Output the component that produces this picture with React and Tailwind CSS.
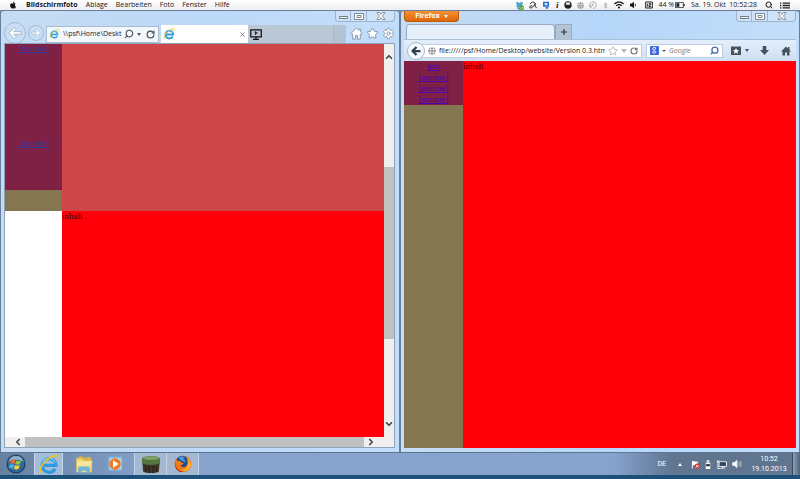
import { FaApple, FaWifi, FaVolumeDown, FaGlobe, FaBluetoothB } from 'react-icons/fa';
import { Star, Settings, Search, RotateCw, ChevronUp, ChevronDown, ChevronLeft, ChevronRight, X } from 'lucide-react';

const menuItems = ['Ablage', 'Bearbeiten', 'Foto', 'Fenster', 'Hilfe'];

function IeLogo({ className }) {
  return (
    <svg viewBox="0 0 24 24" className={className} fill="none">
      <path d="M19.500 17a7.800 7.800 0 1 1 1-4H6" stroke="#2c9bdf" strokeWidth="3.600" />
      <path d="M5 11c1-4 4-6 7.500-6s6 2 7 5" stroke="#7fd0f7" strokeWidth="1.200" />
      <path d="M4 22c-4-3 1-11 7-16S22 1 22.500 3c.3 1.500-.2 2.500-.8 3.500" stroke="#f2c21c" strokeWidth="1.800" />
    </svg>
  );
}

function NavArrow({ className }) {
  return (
    <svg viewBox="0 0 16 16" className={className}>
      <path d="M7.500 1.500L1 8l6.500 6.500 2-2L6.500 9.500H15v-3H6.500l3-3z" fill="#fff" stroke="#9fb3c9" />
    </svg>
  );
}

function FirefoxLogo() {
  return (
    <svg viewBox="0 0 24 24" className="size-[18px]">
      <circle cx="12" cy="12" r="11" fill="#e66912" />
      <circle cx="11" cy="9" r="8" fill="#234b93" />
      <path d="M6 3c4-2 7-1 9 1l-3 1c2 1 4 3 3 5L8 6z" fill="#4b9bdc" />
      <path d="M2 6c1 0 2 1 3 2 2-1 4 0 5 2l3 1c-1 2-4 2-4 3 1 3 6 3 8 0 2-4 1-8-1-11 6 3 8 9 6 13-3 7-12 9-17 4C0 16 0 10 2 6z" fill="#ef7d17" />
      <path d="M18 4c5 5 5 11 2 14-3 4-8 4-11 3 6 0 13-6 9-17z" fill="#f9bd2d" />
      <path d="M2 8c-1 8 4 14 11 14C7 25-1 18 2 8z" fill="#bd3510" />
    </svg>
  );
}

function StartOrb() {
  return (
    <svg viewBox="0 0 24 24" className="size-5">
      <circle cx="12" cy="12" r="11.500" fill="#1c4168" />
      <circle cx="12" cy="12" r="10" fill="#326a9c" />
      <path d="M3 9a9.500 9.500 0 0 1 18 0c-6-3-12-3-18 0z" fill="#8faec9" />
      <path d="M6 7.500c2-1.300 3.700-1 5.300-.2l-1.200 4.400c-1.600-.8-3.300-.9-5.300.3z" fill="#ef6733" />
      <path d="M12.300 7.700c2 1 3.700 1 5.700-.2l-1.200 4.600c-2 1-3.700 1-5.700 0z" fill="#8fc73e" />
      <path d="M4.500 13c2-1.200 3.700-1 5.300-.2l-1.200 4.500c-1.600-.8-3.400-.9-5.300.2z" fill="#3fb2ea" />
      <path d="M10.800 13.200c2 1 3.700 1 5.600 0l-1.200 4.500c-2 1.100-3.700 1-5.600 0z" fill="#fbd235" />
    </svg>
  );
}

function FolderIcon() {
  return (
    <svg viewBox="0 0 24 24" className="size-5">
      <path d="M3 4h3l1-2 4 2h6l1-1 3 2v16H3z" fill="#d9b550" />
      <path d="M3 6h7l2 2h10l-1 14H3z" fill="#f2d878" />
      <path d="M4 9h16v5H4z" fill="#f9e6a0" />
      <path d="M5 23v-5c0-2 1-3 3-3h8c2 0 3 1 3 3v5h-4v-3H9v3z" fill="#6cb6dc" />
    </svg>
  );
}

function MediaPlayerIcon() {
  return (
    <svg viewBox="0 0 24 24" className="size-4">
      <path d="M2 1h21v21H2z" fill="#86b9e2" />
      <path d="M4 3h17v17H4z" fill="#b4d4ee" />
      <circle cx="12" cy="12" r="8.500" fill="#f07a22" />
      <path d="M9 6.500v11l8.500-5.500z" fill="#fff" />
    </svg>
  );
}

function GrassBlockIcon() {
  return (
    <svg viewBox="0 0 24 24" className="size-5">
      <path d="M1.500 8h21l-1 13c-4 2.500-15 2.500-19 0z" fill="#41362b" />
      <path d="M1 5c5-3.500 17-3.500 22 0l-.5 6c-6 2.500-15 2.500-21 0z" fill="#56783f" />
      <path d="M2 5c5-2.800 15-2.800 20 0-5 2.500-15 2.500-20 0z" fill="#84a46a" />
      <path d="M6 14v8M10 14v9M14.500 14v9M18.500 14v8" stroke="#2a211a" strokeWidth="1.500" />
    </svg>
  );
}

function DropboxIcon() {
  return (
    <svg viewBox="0 0 24 24" className="size-[9px]">
      <path d="M2 5l5-3 5 4 5-4 5 3-4 4 4 4-10 5-10-5 4-4z" fill="#4c9fc9" />
      <path d="M6 15l6 5 6-5v4l-6 4-6-4z" fill="#2f7397" />
      <circle cx="18" cy="18" r="6" fill="#46a52f" />
      <path d="M15 18l2 2 4-4" stroke="#fff" strokeWidth="2" fill="none" />
    </svg>
  );
}

function MacMenuBar() {
  return (
    <header className="flex h-[10px] shrink-0 items-center justify-between bg-linear-to-b from-white to-[#eeeef2] pr-[10px] pl-[9px] text-[7px] leading-[10px] text-[#161616]">
      <nav className="flex items-center gap-2">
        <FaApple className="mr-px size-2" />
        <a href="#app" className="font-bold">Bildschirmfoto</a>
        {menuItems.map((item) => (
          <a key={item} href={'#' + item}>{item}</a>
        ))}
      </nav>
      <div className="flex items-center">
        <div className="mr-2 flex items-center gap-[5px]">
          <DropboxIcon />
          <svg viewBox="0 0 24 24" className="size-2" fill="none" stroke="#222" strokeWidth="3">
            <path d="M4 9c2-7 13-8 14-1 0 5-4 8-7 9M18 7c0 8 0 12 5 13M11 17c-4 6-8 5-9 2 0-4 5-7 8-3" />
          </svg>
          <svg viewBox="0 0 24 24" className="size-2">
            <path d="M3 2h18v14l-4 7h-6V17H3z" fill="#2c6fc9" />
            <path d="M8 6h8v7H8zM14 16h4l-3 4z" fill="#dcecff" />
          </svg>
          <span className="w-1 text-center font-['Liberation_Serif',serif] text-[9px] font-bold italic">i</span>
          <svg viewBox="0 0 24 24" className="size-2">
            <circle cx="12" cy="12" r="11" fill="#222" />
            <ellipse cx="12" cy="8" rx="7" ry="4" fill="#ddd" />
          </svg>
          <FaGlobe className="size-[7px] text-[#999]" />
          <svg viewBox="0 0 24 24" className="size-2" fill="none" stroke="#888" strokeWidth="2">
            <path d="M5 19a10 10 0 1 1 7 3M1 16l4 4 2-5M12 6v7H7" />
          </svg>
          <FaBluetoothB className="size-[7px] text-[#aaa]" />
          <FaWifi className="size-[10px]" />
          <FaVolumeDown className="size-2" />
        </div>
        <div className="flex items-center gap-[5px]">
          <svg viewBox="0 0 24 24" className="size-2" fill="none" stroke="#222" strokeWidth="3">
            <path d="M2 3h20v18H2zM7 8v9M11 8h6v4h-5v5h6" />
          </svg>
          <span className="flex items-center gap-px">
            44 %
            <svg viewBox="0 0 30 18" className="h-[6px] w-[10px]">
              <path d="M1 1h24v16H1z" fill="none" stroke="#222" strokeWidth="2.500" />
              <path d="M4 4h9v10H4zM26 6h3v6h-3z" fill="#222" />
            </svg>
          </span>
          <time className="ml-px whitespace-pre">Sa. 19. Okt  10:52:28</time>
          <Search className="ml-[3px] size-2" strokeWidth={3} />
          <svg viewBox="0 0 30 20" className="ml-[2px] h-[7px] w-[10px]" stroke="#222" strokeWidth="4">
            <path d="M0 3h4M8 3h22M0 10h4M8 10h22M0 17h4M8 17h22" />
          </svg>
        </div>
      </div>
    </header>
  );
}

function WindowButtons() {
  return (
    <div className="flex h-[11px] divide-x divide-[#9db4cc] rounded-b-sm border border-t-0 border-[#9db4cc] bg-[#cfe2f7]">
      <button aria-label="Minimieren" className="flex w-[15px] items-end justify-center pb-[2px]">
        <svg viewBox="0 0 9 3" className="h-[3px] w-[9px]" fill="#fff" stroke="#6e7b89"><path d="M.5.500h8v2h-8z" /></svg>
      </button>
      <button aria-label="Maximieren" className="flex w-[16px] items-center justify-center">
        <svg viewBox="0 0 10 7" className="h-[7px] w-[10px]" fill="#fff" stroke="#7b8997"><path d="M.5.500h9v6h-9zM3 2.500h4v2H3z" /></svg>
      </button>
      <button aria-label="Schließen" className="flex w-[27px] items-center justify-center">
        <svg viewBox="0 0 10 8" className="h-2 w-[10px]" fill="#fff" stroke="#6e7b89" strokeWidth=".8">
          <path d="M1 .5h2.500L5 2.500 6.500.5H9L6.500 4 9 7.500H6.500L5 5.500 3.500 7.500H1L3.500 4z" />
        </svg>
      </button>
    </div>
  );
}

function ExplorerWindow() {
  return (
    <section className="flex min-w-0 flex-col rounded-t-sm border-x border-t border-[#66809c] bg-linear-to-r from-[#c6dcf2] via-[#bcd9f8] to-[#c3defa] pr-1 pb-1 pl-[3px]">
      <div className="flex justify-end">
        <WindowButtons />
      </div>
      <div className="flex h-[21px] items-center">
        <button aria-label="Zurück" className="flex size-[22px] shrink-0 items-center justify-center rounded-full border border-[#a3bad3] bg-[#c8def5]">
          <NavArrow className="size-[14px]" />
        </button>
        <button aria-label="Vorwärts" className="ml-[2px] flex size-4 shrink-0 items-center justify-center rounded-full border border-[#a3bad3] bg-[#c8def5]">
          <NavArrow className="size-[10px] rotate-180" />
        </button>
        <div className="mt-[3px] ml-[2px] flex h-[17px] w-[113px] items-center border border-[#a9bccf] bg-[#f2f7fc] px-[2px] text-[#454c54]">
          <IeLogo className="size-[10px] shrink-0" />
          <input aria-label="Adresse" readOnly value="\\psf\Home\Deskt" className="ml-1 w-[61px] min-w-0 bg-transparent text-[7px] leading-3 text-[#1d2228] outline-none" />
          <Search className="size-[10px] shrink-0 -scale-x-100" strokeWidth={2.5} />
          <span className="mx-[3px] border-x-2 border-t-[3px] border-x-transparent border-t-[#555]" />
          <RotateCw className="ml-[2px] size-[9px] shrink-0" strokeWidth={3} />
        </div>
        <div className="mt-[3px] ml-[2px] flex h-[18px] w-[87px] items-center justify-between bg-white px-[2px]">
          <IeLogo className="size-3" />
          <button aria-label="Tab schließen"><X className="size-[7px] text-[#555]" strokeWidth={2.5} /></button>
        </div>
        <div className="mt-[3px] flex h-[18px] flex-1 items-center border-r border-[#a6b8ca] bg-[#bac7d4] pl-[2px]">
          <svg viewBox="0 0 24 22" className="h-[11px] w-3" fill="none" stroke="#111" strokeWidth="2.500">
            <path d="M1.500 1.500h21v14h-21zM12 16v4M6 20.500h12" />
            <path d="M10 5l5 3-3 1-1 3z" fill="#111" strokeWidth="1" />
          </svg>
        </div>
        <div className="mt-[3px] h-[18px] w-3 bg-[#b3c3d3]" />
        <div className="mt-[2px] ml-1 flex gap-[3px] text-[#8497ac]">
          <svg viewBox="0 0 24 24" className="size-[13px]" fill="#fff" stroke="currentColor" strokeWidth="1.800">
            <path d="M12 2L1.500 12l1.500 2 2-1v9.500h5V16h4v6.500h5V13l2 1 1.500-2-3-3V4h-3v2z" />
          </svg>
          <Star className="size-[13px]" fill="#fff" strokeWidth={1.8} />
          <Settings className="size-[13px]" fill="#fff" strokeWidth={1.8} />
        </div>
      </div>
      <div className="flex min-h-0 flex-1 flex-col border border-[#8da3b9] bg-[#f0efee]">
        <div className="flex min-h-0 flex-1">
          <div className="w-[57px] shrink-0 bg-white text-center font-['Liberation_Serif',serif] text-[9px] leading-[9px]">
            <div className="flex h-[146px] flex-col items-center gap-[86px] bg-[#7f2144] text-[#343a9f]">
              <a href="#menue1" className="underline">[menue]</a>
              <a href="#menue2" className="underline">[menue]</a>
            </div>
            <div className="h-[21px] bg-[#837650]" />
          </div>
          <div className="min-w-0 flex-1 bg-[#ff0008] font-['Liberation_Serif',serif] text-[9px] leading-[11px] text-[#480006]">
            <div className="h-[167px] bg-[#cf4649]" />
            <p>inhalt</p>
          </div>
          <div className="flex w-[10px] shrink-0 flex-col items-center text-[#444]">
            <ChevronUp className="mt-2 size-[10px]" strokeWidth={4} />
            <div className="mt-[105px] w-full flex-1 bg-[#c2c1c1]" />
            <ChevronDown className="mt-[80px] mb-2 size-[10px]" strokeWidth={4} />
          </div>
        </div>
        <div className="flex h-[10px] shrink-0 items-center pr-[18px] pl-2 text-[#444]">
          <ChevronLeft className="size-[10px]" strokeWidth={4} />
          <div className="mx-[2px] h-[10px] flex-1 bg-[#c2c1c1]" />
          <ChevronRight className="size-[10px]" strokeWidth={4} />
        </div>
      </div>
    </section>
  );
}

function FirefoxWindow() {
  return (
    <section className="flex min-w-0 flex-col rounded-t-sm border-x border-t border-[#66809c] bg-linear-to-r from-[#c6dcf2] via-[#b5d6f9] to-[#c3defa] px-[3px] pb-1">
      <div className="flex h-[13px] items-start justify-between">
        <button className="flex h-[11px] w-[55px] items-center justify-center gap-1 rounded-b-sm border border-t-0 border-[#bd5a0c] bg-linear-to-b from-[#f39232] to-[#df6505] text-[7px] font-bold text-white">
          Firefox
          <span className="border-x-2 border-t-[3px] border-x-transparent border-t-white" />
        </button>
        <WindowButtons />
      </div>
      <div className="flex h-[15px] pl-[2px]">
        <div className="w-[149px] rounded-t-sm border border-b-0 border-[#97abc0] bg-[#e6f0fb]" />
        <button aria-label="Neuer Tab" className="flex w-[17px] items-center justify-center border border-b-0 border-[#97abc0] bg-[#b4c4d6]">
          <svg viewBox="0 0 6 6" className="size-[6px]" stroke="#333" strokeWidth="1.200"><path d="M3 0v6M0 3h6" /></svg>
        </button>
      </div>
      <div className="flex h-[22px] shrink-0 items-center border-t border-[#a9bfd6] bg-linear-to-b from-[#e3eefb] to-[#cfdff1] pr-[5px] pl-[3px] text-[#46525f]">
        <button aria-label="Zurück" className="z-10 flex size-[18px] shrink-0 items-center justify-center rounded-full border border-[#a9b9cb] bg-[#f3f8fd]">
          <svg viewBox="0 0 20 20" className="size-[10px]" fill="none" stroke="#2f3e4e" strokeWidth="4.500">
            <path d="M11 2l-8 8 8 8M4 10h15" />
          </svg>
        </button>
        <div className="-ml-1 flex h-[14px] min-w-0 flex-1 items-center gap-[3px] border border-[#bfcddc] bg-white pr-[3px] pl-[6px]">
          <FaGlobe className="size-[8px] shrink-0 text-[#999]" />
          <input aria-label="URL" readOnly value="file://///psf/Home/Desktop/website/Version 0.3.htm" className="min-w-0 flex-1 bg-transparent text-[7px] leading-3 text-[#222] outline-none" />
          <Star className="size-[10px] shrink-0 text-[#a9adb2]" strokeWidth={2} />
          <span className="border-x-3 border-t-4 border-x-transparent border-t-[#b4b8bc]" />
          <RotateCw className="size-[8px] shrink-0 text-[#777]" strokeWidth={3.5} />
        </div>
        <div className="ml-[4px] flex h-[14px] w-[77px] shrink-0 items-center border border-[#bfcddc] bg-white px-[3px]">
          <svg viewBox="0 0 20 20" className="size-[9px] shrink-0">
            <rect width="20" height="20" rx="2" fill="#3d69d8" />
            <path d="M13 4c-5-2-8 0-7 3s6 2 6-1-2-2-2-2M11 10c3 3 2 6-2 6s-5-4-1-4h2" fill="none" stroke="#fff" strokeWidth="2" />
          </svg>
          <span className="mx-[3px] border-x-2 border-t-2 border-x-transparent border-t-[#555]" />
          <input aria-label="Suche" placeholder="Google" className="w-full min-w-0 bg-transparent text-[7px] leading-3 italic outline-none placeholder:text-[#777]" />
          <Search className="size-[9px] shrink-0 -scale-x-100 text-[#4571ad]" strokeWidth={3.5} />
        </div>
        <button aria-label="Lesezeichen" className="ml-2 flex items-center gap-[3px]">
          <svg viewBox="0 0 22 20" className="h-[10px] w-[11px]" fill="#46525f">
            <path d="M0 1h20v17H0z" />
            <path d="M10 4l2 4h4l-3 3 1 5-4-3-4 3 1-5-3-3h4z" fill="#fff" />
          </svg>
          <span className="border-x-2 border-t-3 border-x-transparent border-t-[#46525f]" />
        </button>
        <button aria-label="Downloads" className="ml-[11px]">
          <svg viewBox="0 0 20 20" className="size-[9px]" fill="#46525f"><path d="M6 0h8v9h6L10 20 0 9h6z" /></svg>
        </button>
        <button aria-label="Startseite" className="ml-3">
          <svg viewBox="0 0 20 20" className="size-[10px]" fill="#46525f"><path d="M10 1L0 11h3v8h5v-6h4v6h5v-8h3l-3-3V2h-3v3z" /></svg>
        </button>
      </div>
      <div className="flex min-h-0 flex-1 font-['Liberation_Serif',serif] text-[9px] leading-[11px]">
        <div className="w-[59px] shrink-0 bg-[#837650]">
          <nav className="flex flex-col items-center bg-[#7f2144] text-[#4a02b8]">
            <a href="#test" className="underline">test</a>
            <a href="#m1" className="underline">[menue]</a>
            <a href="#m2" className="underline">[menue]</a>
            <a href="#m3" className="underline">[menue]</a>
          </nav>
        </div>
        <div className="flex-1 bg-[#ff0008] text-[#480006]">inhalt</div>
      </div>
    </section>
  );
}

function Taskbar() {
  return (
    <footer className="flex h-[23px] shrink-0 items-stretch border-t border-[#5f7690] bg-linear-to-r from-[#66809f] via-[#86a3cd] via-20% to-[#86a3cd] font-['Roboto',sans-serif]">
      <button aria-label="Start" className="flex w-[34px] items-center justify-center pr-[3px]"><StartOrb /></button>
      <button aria-label="Internet Explorer" className="flex w-[29px] items-center justify-center border-x border-[#c4d5e8] bg-[#a4bddb]"><IeLogo className="size-[21px]" /></button>
      <button aria-label="Explorer" className="flex w-[42px] items-center justify-center"><FolderIcon /></button>
      <button aria-label="Media Player" className="flex w-[29px] items-center justify-start pl-[2px]"><MediaPlayerIcon /></button>
      <button aria-label="Minecraft" className="flex w-[33px] items-center justify-center border-x border-[#c4d5e8] bg-[#a4b9d1]"><GrassBlockIcon /></button>
      <button aria-label="Firefox" className="flex w-[32px] items-center justify-center border-r border-[#c4d5e8] bg-[#a4b9d1]"><FirefoxLogo /></button>
      <div className="flex flex-1 items-center justify-end bg-linear-to-r from-transparent from-70% to-[#5f7590] to-80% pr-[5px] text-[7px] text-white">
        <span className="mr-[12px]">DE</span>
        <span className="mr-[9px] border-x-2 border-b-3 border-x-transparent border-b-white" />
        <div className="mr-[9px] flex items-center gap-[5px]">
          <svg viewBox="0 0 20 20" className="size-[9px]">
            <path d="M2 2h2v17H2zM4 3c4-3 6 3 11 0v9c-5 3-7-2-11 0z" fill="#fff" />
            <circle cx="14" cy="14" r="6" fill="#d9342b" />
            <path d="M11 11l6 6M17 11l-6 6" stroke="#fff" strokeWidth="2" />
          </svg>
          <svg viewBox="0 0 12 20" className="h-[9px] w-[6px]"><path d="M3 0h6v6H3z" fill="#ddd" /><path d="M1 6h10v14H1z" fill="#fff" /><path d="M2 9h8v5H2z" fill="#334" /></svg>
          <svg viewBox="0 0 24 20" className="h-[9px] w-[11px]" fill="none" stroke="#fff" strokeWidth="2"><path d="M7 4h16v10H7zM11 18h9M15 14v4M3 1v6M6 1v6M4 8v11h6" /><path d="M8 5h14v8H8z" fill="#33465b" stroke="none" /></svg>
          <svg viewBox="0 0 20 20" className="size-[10px]" fill="none" stroke="#dbe3eb" strokeWidth="1.500"><path d="M1 7h4l5-5v16l-5-5H1z" fill="#fff" /><path d="M13 6c2 3 2 5 0 8M16 4c3 4 3 8 0 12" /></svg>
        </div>
        <time className="w-[36px] text-center leading-[10px]">10:52<br />19.10.2013</time>
      </div>
      <button aria-label="Desktop anzeigen" className="w-[8px] border-l border-[#394b60] bg-linear-to-r from-[#8ca1b7] to-[#4e637b]" />
    </footer>
  );
}

export default function App() {
  return (
    <div className="flex h-screen flex-col overflow-hidden bg-[#1d5079] pb-1 font-['Open_Sans','Noto_Sans',sans-serif]">
      <MacMenuBar />
      <main className="grid min-h-0 flex-1 grid-cols-2 bg-[#7990aa]">
        <ExplorerWindow />
        <FirefoxWindow />
      </main>
      <Taskbar />
    </div>
  );
}
